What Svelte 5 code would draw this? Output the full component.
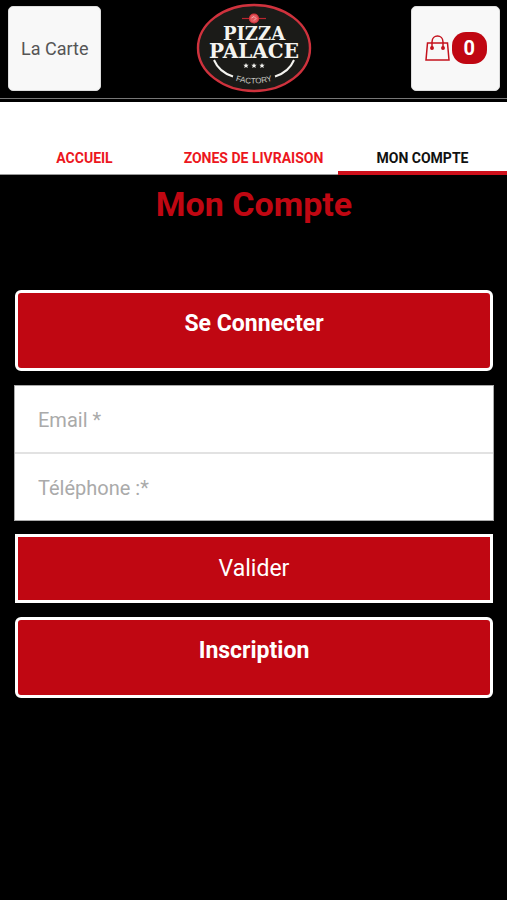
<!--
  @component Account page

  Customer account screen: header with menu and basket, tabs, login form.
-->
<script>
  const tabs = [
    { label: 'ACCUEIL', href: '#accueil' },
    { label: 'ZONES DE LIVRAISON', href: '#zones' },
    { label: 'MON COMPTE', href: '#compte', active: true },
  ];

  let email = $state('');
  let phone = $state('');
  let basketCount = $state(0);
</script>

<header class="header">
  <button type="button" class="header-btn">La Carte</button>

  <a class="logo" href="#accueil" aria-label="Pizza Palace Factory">
    <svg width="116" height="90" viewBox="0 0 116 90">
      <ellipse cx="58" cy="45" rx="56" ry="43" fill="#1b1b18" stroke="#cf323d" stroke-width="2.4" />
      <path d="M46 15.5H70" stroke="#b8262f" stroke-width="1.2" />
      <circle cx="58" cy="15.5" r="4.5" fill="#e2575c" stroke="#d8323b" stroke-width="1.2" />
      <path d="M55.5 15l2.5-1.5 2 2-2 2" fill="none" stroke="#f3b0b0" stroke-width="1" />
      <text class="logo-name" x="58" y="37" font-size="18">PIZZA</text>
      <text class="logo-name" x="58" y="55" font-size="20">PALACE</text>
      <g fill="#f4f4f0">
        <path id="star" d="M50 60l.8 1.7 1.9.1-1.5 1.3.6 1.9-1.8-1-1.8 1 .6-1.9-1.5-1.3 1.9-.1z" />
        <use href="#star" x="8" />
        <use href="#star" x="16" />
      </g>
      <path
        d="M18 57Q23 69 37 73.5M98 57Q93 69 79 73.5"
        fill="none"
        stroke="#f4f4f0"
        stroke-width="2"
      />
      <path id="factory-arc" d="M30 74Q58 87 86 74" fill="none" />
      <text class="logo-sub" font-size="8">
        <textPath href="#factory-arc" startOffset="50%">FACTORY</textPath>
      </text>
    </svg>
  </a>

  <button type="button" class="header-btn" aria-label="Panier">
    <svg width="26" height="28" viewBox="0 0 26 28" fill="none" stroke="#c4121d" stroke-width="1.5">
      <path d="M3.5 9H23.5L25 26H2Z" />
      <path d="M8 14V8C8 0 19 0 19 8V14" />
      <circle cx="8" cy="14" r="1.2" fill="#c4121d" />
      <circle cx="19" cy="14" r="1.2" fill="#c4121d" />
    </svg>
    <span class="badge">{basketCount}</span>
  </button>
</header>

<nav class="tabs">
  {#each tabs as tab}
    <a href={tab.href} class="tab" class:active={tab.active}>{tab.label}</a>
  {/each}
</nav>

<main class="account">
  <h1>Mon Compte</h1>

  <button type="button" class="btn btn-section">Se Connecter</button>

  <form class="login" onsubmit={(e) => e.preventDefault()}>
    <div class="fields">
      <input type="email" aria-label="Email" placeholder="Email *" bind:value={email} />
      <input type="tel" aria-label="Téléphone" placeholder="Téléphone :*" bind:value={phone} />
    </div>
    <button type="submit" class="btn btn-submit">Valider</button>
  </form>

  <button type="button" class="btn btn-section">Inscription</button>
</main>

<style>
  :global(body) {
    background: #000;
    font-family: Roboto, sans-serif;
  }

  .header {
    display: grid;
    grid-template-columns: 1fr auto 1fr;
    align-items: center;
    padding: 3px 7px 5px 8px;
    border-bottom: 1px solid #777;
  }

  .header-btn {
    display: flex;
    align-items: center;
    justify-content: center;
    gap: 2px;
    height: 85px;
    padding: 0 12px;
    border: 1px solid #ddd;
    border-radius: 5px;
    background: #f8f8f8;
    color: #555;
    font-family: inherit;
    font-size: 18px;
    justify-self: start;
    cursor: pointer;
  }

  .header-btn:last-child {
    justify-self: end;
  }

  .logo {
    display: flex;
  }

  .logo-name {
    font-family: 'DejaVu Serif', serif;
    font-weight: bold;
    fill: #f4f4f0;
    text-anchor: middle;
  }

  .logo-sub {
    font-family: 'Liberation Sans', sans-serif;
    fill: #c8c8c4;
    text-anchor: middle;
  }

  .badge {
    padding: 0 12px;
    border-radius: 14px;
    background: #c00712;
    color: #fff;
    font-size: 20px;
    font-weight: bold;
    line-height: 32px;
  }

  .tabs {
    display: grid;
    grid-template-columns: repeat(3, 1fr);
    margin-top: 3px;
    background: #fff;
  }

  .tab {
    padding: 47px 0 7px;
    border-bottom: 1px solid #999;
    color: #ec1620;
    font-size: 14px;
    font-weight: bold;
    line-height: 18px;
    text-align: center;
    text-decoration: none;
  }

  .tab.active {
    padding-bottom: 4px;
    border-bottom: 4px solid #cf101b;
    color: #111;
  }

  .account {
    display: flex;
    flex-direction: column;
    gap: 14px;
    padding: 8px 13px 8px 14px;
  }

  h1 {
    margin: 0 0 51px;
    color: #c00712;
    font-size: 34px;
    font-weight: bold;
    line-height: 42px;
    text-align: center;
  }

  .btn {
    margin: 0 1px;
    border: 3px solid #fff;
    background: #c00712;
    color: #fff;
    font-family: inherit;
    font-size: 23px;
    line-height: 28px;
    cursor: pointer;
  }

  .btn-section {
    padding: 17px 0 30px;
    border-radius: 6px;
    font-weight: bold;
  }

  .btn-submit {
    padding: 18px 0 17px;
  }

  .login {
    display: flex;
    flex-direction: column;
    gap: 13px;
  }

  .fields {
    display: flex;
    flex-direction: column;
    border: 1px solid #aaa;
    background: #fff;
  }

  .fields input {
    padding: 22px 23px 20px;
    border: 0;
    background: transparent;
    color: #333;
    font-family: inherit;
    font-size: 20px;
    line-height: 24px;
  }

  .fields input + input {
    border-top: 2px solid #e2e2e2;
  }

  .fields input::placeholder {
    color: #aaa;
    opacity: 1;
  }
</style>
